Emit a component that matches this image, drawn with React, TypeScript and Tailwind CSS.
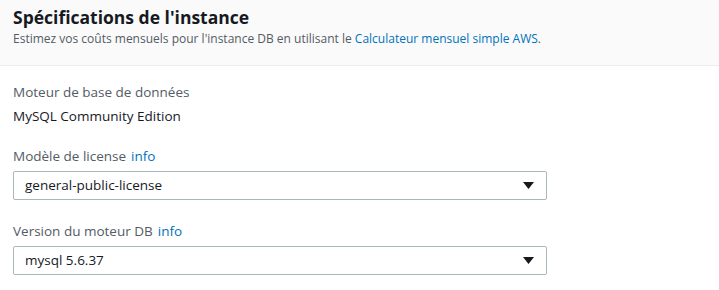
import { useState } from "react";

const font = { fontFamily: '"Open Sans", "Noto Sans", Arial, sans-serif' };

function Caret() {
  return (
    <svg width="11" height="7" viewBox="0 0 11 7" className="shrink-0">
      <path d="M0 0h11L5.5 7z" fill="#16191f" />
    </svg>
  );
}

function SelectBox({ value }: { value: string }) {
  return (
    <div className="w-[534px] h-[29px] flex items-center justify-between pl-[11px] pr-[12px] border border-[#aab7b8] rounded-[2px] bg-white text-[13.5px] text-[#16191f]">
      <span>{value}</span>
      <Caret />
    </div>
  );
}

function Label({ text, info }: { text: string; info?: boolean }) {
  return (
    <div className="text-[13.5px] leading-[20px] text-[#545b64]">
      {text}
      {info && <a className="ml-[5px] text-[#0073bb] cursor-pointer">info</a>}
    </div>
  );
}

export default function App() {
  const [license] = useState("general-public-license");
  const [version] = useState("mysql 5.6.37");

  return (
    <div className="w-[719px] h-[290px] bg-white overflow-hidden" style={font}>
      <div className="h-[66px] bg-[#fafafa] border-b border-[#eaeded] px-[13px] pt-[4px]">
        <h2 className="text-[17.5px] leading-[26px] font-bold text-[#16191f]">
          Spécifications de l'instance
        </h2>
        <p className="text-[12px] leading-[18px] text-[#545b64]">
          Estimez vos coûts mensuels pour l'instance DB en utilisant le{" "}
          <a className="text-[#0073bb] cursor-pointer">Calculateur mensuel simple AWS</a>.
        </p>
      </div>

      <div className="px-[13px] pt-[16px]">
        <Label text="Moteur de base de données" />
        <div className="mt-[4px] text-[13.5px] leading-[20px] text-[#16191f]">
          MySQL Community Edition
        </div>

        <div className="mt-[20px]">
          <Label text="Modèle de license" info />
          <div className="mt-[5px]">
            <SelectBox value={license} />
          </div>
        </div>

        <div className="mt-[21px]">
          <Label text="Version du moteur DB" info />
          <div className="mt-[5px]">
            <SelectBox value={version} />
          </div>
        </div>
      </div>
    </div>
  );
}
